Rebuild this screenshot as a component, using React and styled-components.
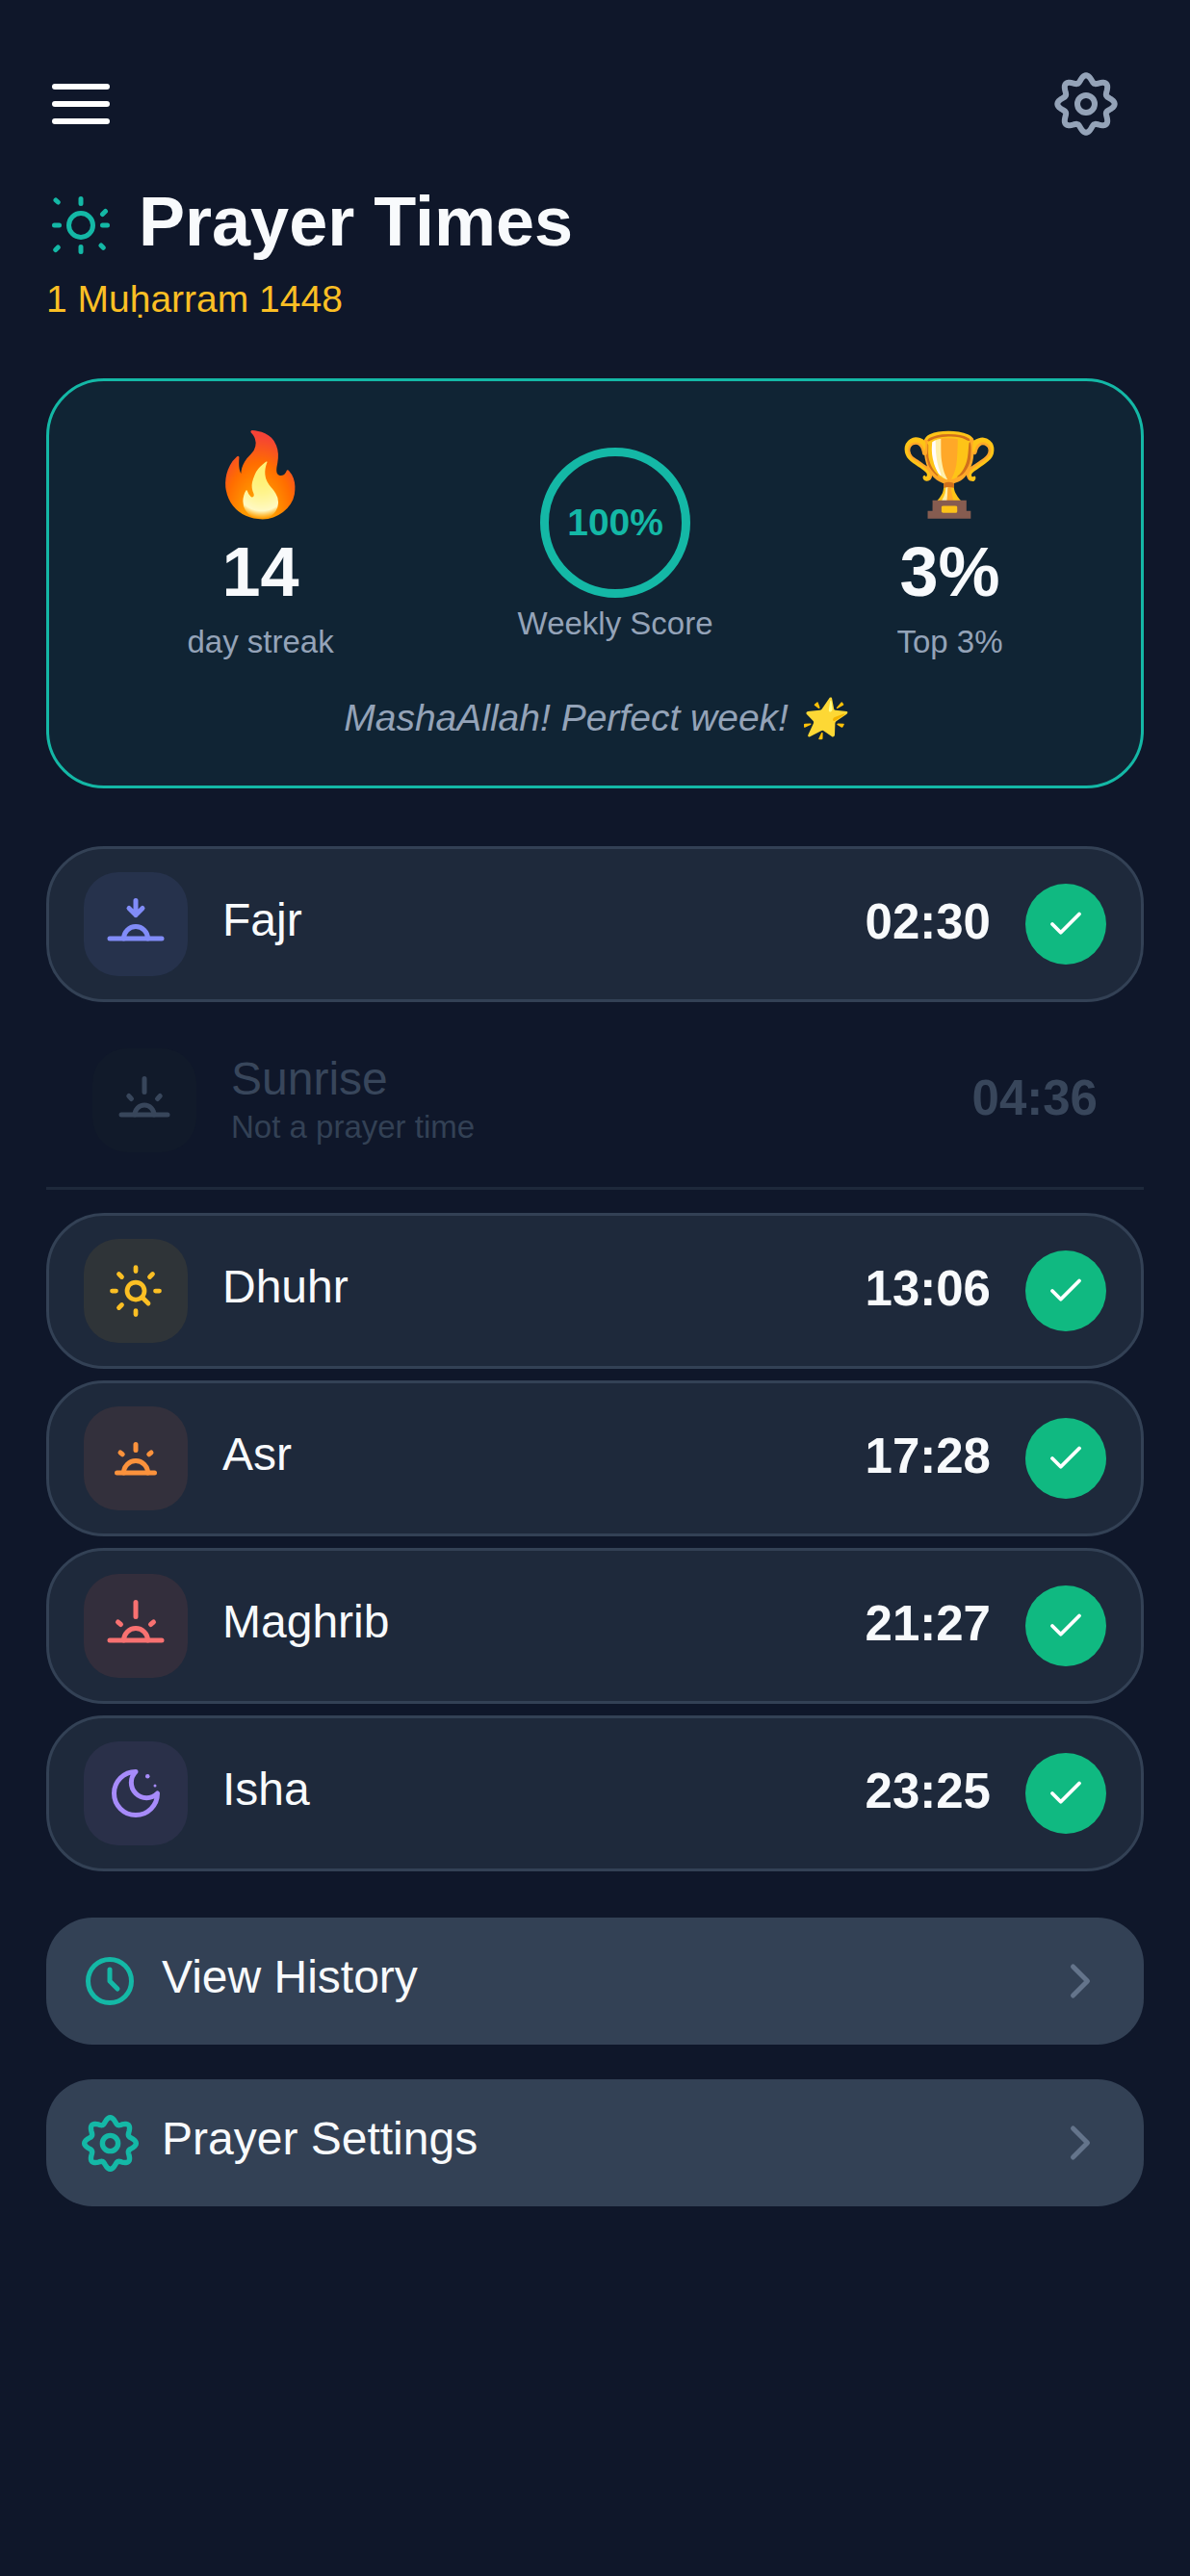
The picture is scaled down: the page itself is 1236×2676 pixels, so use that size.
import React from "react";
import styled, { createGlobalStyle } from "styled-components";
import { ChevronRight, Check } from "lucide-react";

const GlobalStyle = createGlobalStyle`
  html, body {
    margin: 0;
    padding: 0;
    background: #0f172a;
    font-family: "Liberation Sans", Arial, sans-serif;
  }
`;

// wavy 8 lobe outline of the gear
const gearPath = () => {
  const pts = [];
  for (let i = 0; i < 144; i++) {
    const a = (i / 144) * Math.PI * 2;
    const r = 8.75 + 1.15 * Math.cos(8 * a);
    pts.push(`${(12 + r * Math.sin(a)).toFixed(2)} ${(12 - r * Math.cos(a)).toFixed(2)}`);
  }
  return `M${pts.join("L")}Z`;
};

const Icon = ({ size = 60, color, sw = 2, children }) => (
  <svg width={size} height={size} viewBox="0 0 24 24" fill="none" stroke={color} strokeWidth={sw} strokeLinecap="round" strokeLinejoin="round" style={{ flex: "none" }}>
    {children}
  </svg>
);

const Gear = ({ size, color }) => (
  <Icon size={size} color={color}>
    <circle cx="12" cy="12" r="3" />
    <path d={gearPath()} />
  </Icon>
);

const TitleSun = () => (
  <Icon color="#14b8a6">
    <circle cx="12" cy="12" r="5" />
    <path d="M12 1v2M12 21v2M1 12h2M21 12h2M1.6 1.6l.9.8M21 7.4l1.2-1.2M20.4 20.4l.9.9M1.5 22.2l1-1" />
  </Icon>
);

const NoonSun = () => (
  <Icon color="#fbbf24" sw={1.9}>
    <circle cx="12" cy="12" r="3.6" />
    <path d="M12 2.2v1.6M12 20.2v1.6M2.2 12h1.6M20.2 12h1.6M5 5l1.2 1.2M19 5l-1.2 1.2M6.2 17.8L5 19M15 15l2.2 2.2" />
  </Icon>
);

const Horizon = ({ color, half = 9.8, r = 5, children }) => (
  <Icon color={color}>
    <path d={`M${12 - r} 18a${r} ${r} 0 0 1 ${r * 2} 0`} />
    <path d={`M${12 - half} 18h${half * 2}`} />
    {children}
  </Icon>
);

const Moon = () => (
  <Icon color="#a78bfa">
    <path d="M12 3a6 6 0 0 0 9 9 9 9 0 1 1-9-9z" />
    <circle cx="16.9" cy="4.9" r=".9" fill="#a78bfa" stroke="none" />
    <circle cx="20" cy="8.8" r=".6" fill="#a78bfa" stroke="none" />
  </Icon>
);

const HistoryClock = () => (
  <Icon color="#14b8a6">
    <circle cx="12" cy="12" r="9" />
    <path d="M12 7.2V12l3.2 3.2" />
  </Icon>
);

const Page = styled.div`
  box-sizing: border-box;
  width: 1236px;
  min-height: 2676px;
  padding: 72px 48px 0;
  background: #0f172a;
`;

const TopBar = styled.header`
  display: flex;
  justify-content: space-between;
  align-items: center;
  height: 72px;
  padding: 0 24px 0 6px;
`;

const MenuButton = styled.div`
  display: flex;
  flex-direction: column;
  gap: 12px;
  width: 60px;
  span {
    height: 6px;
    border-radius: 3px;
    background: #fff;
  }
`;

const TitleRow = styled.div`
  display: flex;
  align-items: center;
  gap: 30px;
  margin-top: 44px;
  svg {
    margin: 8px 0 0 6px;
  }
`;

const Title = styled.h1`
  margin: 0;
  font-size: 72px;
  font-weight: 700;
  line-height: 84px;
  color: #f8fafc;
`;

const DateLine = styled.p`
  margin: 16px 0 0;
  font-size: 39px;
  line-height: 45px;
  color: #fbbf24;
`;

const StatsCard = styled.section`
  box-sizing: border-box;
  height: 426px;
  margin-top: 60px;
  padding: 50px 48px 0;
  border: 3px solid #14b8a6;
  border-radius: 60px;
  background: #102434;
`;

const StatsGrid = styled.div`
  display: flex;
  justify-content: space-around;
  align-items: center;
`;

const Stat = styled.div`
  display: flex;
  flex-direction: column;
  align-items: center;
`;

const Emoji = styled.div`
  font-size: 84px;
  line-height: 96px;
  font-family: "Noto Color Emoji", sans-serif;
`;

const StatValue = styled.div`
  margin-top: 10px;
  font-size: 72px;
  font-weight: 700;
  line-height: 84px;
  color: #f8fafc;
`;

const StatLabel = styled.div`
  margin-top: ${(p) => p.$top}px;
  font-size: 33px;
  line-height: 38px;
  color: #94a3b8;
`;

const Ring = styled.div`
  box-sizing: border-box;
  display: flex;
  align-items: center;
  justify-content: center;
  width: 156px;
  height: 156px;
  border: 9px solid #14b8a6;
  border-radius: 50%;
  font-size: 39px;
  font-weight: 700;
  color: #14b8a6;
`;

const Praise = styled.p`
  margin: 37px 0 0;
  text-align: center;
  font-size: 39px;
  line-height: 45px;
  font-style: italic;
  color: #94a3b8;
`;

const PrayerList = styled.div`
  display: flex;
  flex-direction: column;
  gap: 12px;
  margin-top: 60px;
`;

const Row = styled.div`
  box-sizing: border-box;
  display: flex;
  align-items: center;
  gap: 36px;
  height: 162px;
  padding: 0 36px;
  border: 3px solid #334155;
  border-radius: 60px;
  background: #1e293b;
`;

const MutedRow = styled.div`
  box-sizing: border-box;
  display: flex;
  align-items: center;
  gap: 36px;
  height: 183px;
  padding: 0 48px;
  margin-bottom: 12px;
  border-bottom: 3px solid #1e293b;
`;

const IconBox = styled.div`
  flex: none;
  display: flex;
  align-items: center;
  justify-content: center;
  width: 108px;
  height: 108px;
  border-radius: 36px;
  background: ${(p) => p.$bg};
`;

const Names = styled.div`
  flex: 1;
  padding-bottom: ${(p) => (p.$muted ? 3 : 8)}px;
`;

const Name = styled.div`
  font-size: 48px;
  line-height: 58px;
  color: ${(p) => (p.$muted ? "#38465b" : "#f8fafc")};
`;

const Note = styled.div`
  font-size: 33px;
  line-height: 42px;
  color: #334155;
`;

const Time = styled.div`
  padding-bottom: 6px;
  font-size: 51px;
  font-weight: 700;
  color: ${(p) => (p.$muted ? "#38465b" : "#f8fafc")};
`;

const Done = styled.div`
  flex: none;
  display: flex;
  align-items: center;
  justify-content: center;
  width: 84px;
  height: 84px;
  border-radius: 50%;
  background: #10b981;
  color: #fff;
`;

const LinkButton = styled.div`
  box-sizing: border-box;
  display: flex;
  align-items: center;
  gap: 24px;
  height: 132px;
  margin-top: ${(p) => p.$top}px;
  padding: 0 36px;
  border-radius: 48px;
  background: #334155;
`;

const LinkIcon = styled.div`
  flex: none;
  display: flex;
  align-items: center;
  justify-content: center;
  width: 60px;
  height: 60px;
`;

const LinkText = styled.div`
  flex: 1;
  padding-bottom: 8px;
  font-size: 48px;
  line-height: 58px;
  color: #f8fafc;
`;

const prayers = [
  { name: "Dhuhr", time: "13:06", bg: "#2f3438", icon: <NoonSun /> },
  {
    name: "Asr",
    time: "17:28",
    bg: "#33303c",
    icon: (
      <Horizon color="#fb923c" half={7.8}>
        <path d="M12 6.2v2.4M5.6 9.6l.9.7M18.4 9.6l-.9.7" />
      </Horizon>
    ),
  },
  {
    name: "Maghrib",
    time: "21:27",
    bg: "#332e3c",
    icon: (
      <Horizon color="#f87171" half={10.8}>
        <path d="M12 2.2v6M4.6 10.4l1.2 1M19.4 10.4l-1.2 1" />
      </Horizon>
    ),
  },
  { name: "Isha", time: "23:25", bg: "#2a3049", icon: <Moon /> },
];

const PrayerRow = ({ name, time, bg, icon }) => (
  <Row>
    <IconBox $bg={bg}>{icon}</IconBox>
    <Names><Name>{name}</Name></Names>
    <Time>{time}</Time>
    <Done><Check size={42} strokeWidth={2.2} /></Done>
  </Row>
);

export default function App() {
  return (
    <Page>
      <GlobalStyle />
      <TopBar>
        <MenuButton><span /><span /><span /></MenuButton>
        <Gear size={72} color="#94a3b8" />
      </TopBar>
      <TitleRow>
        <TitleSun />
        <Title>Prayer Times</Title>
      </TitleRow>
      <DateLine>1 Muḥarram 1448</DateLine>
      <StatsCard>
        <StatsGrid>
          <Stat>
            <Emoji>🔥</Emoji>
            <StatValue>14</StatValue>
            <StatLabel $top={12}>day streak</StatLabel>
          </Stat>
          <Stat>
            <Ring>100%</Ring>
            <StatLabel $top={8}>Weekly Score</StatLabel>
          </Stat>
          <Stat>
            <Emoji>🏆</Emoji>
            <StatValue>3%</StatValue>
            <StatLabel $top={12}>Top 3%</StatLabel>
          </Stat>
        </StatsGrid>
        <Praise>MashaAllah! Perfect week! 🌟</Praise>
      </StatsCard>
      <PrayerList>
        <PrayerRow
          name="Fajr"
          time="02:30"
          bg="#26324c"
          icon={
            <Horizon color="#818cf8" half={10.8}>
              <path d="M12 2.2v6M9.2 5.4L12 8.2l2.8-2.8" />
            </Horizon>
          }
        />
        <MutedRow>
          <IconBox $bg="#111a2a">
            <Horizon color="#38465b" half={9.6} r={4}>
              <path d="M12 3v5.6M5.5 10.2l1.1 1.2M18.5 10.2l-1.1 1.2" />
            </Horizon>
          </IconBox>
          <Names $muted>
            <Name $muted>Sunrise</Name>
            <Note>Not a prayer time</Note>
          </Names>
          <Time $muted>04:36</Time>
        </MutedRow>
        {prayers.map((p) => <PrayerRow key={p.name} {...p} />)}
      </PrayerList>
      <LinkButton $top={48}>
        <LinkIcon><HistoryClock /></LinkIcon>
        <LinkText>View History</LinkText>
        <ChevronRight size={60} color="#64748b" strokeWidth={2} />
      </LinkButton>
      <LinkButton $top={36}>
        <LinkIcon><Gear size={65} color="#14b8a6" /></LinkIcon>
        <LinkText>Prayer Settings</LinkText>
        <ChevronRight size={60} color="#64748b" strokeWidth={2} />
      </LinkButton>
    </Page>
  );
}
